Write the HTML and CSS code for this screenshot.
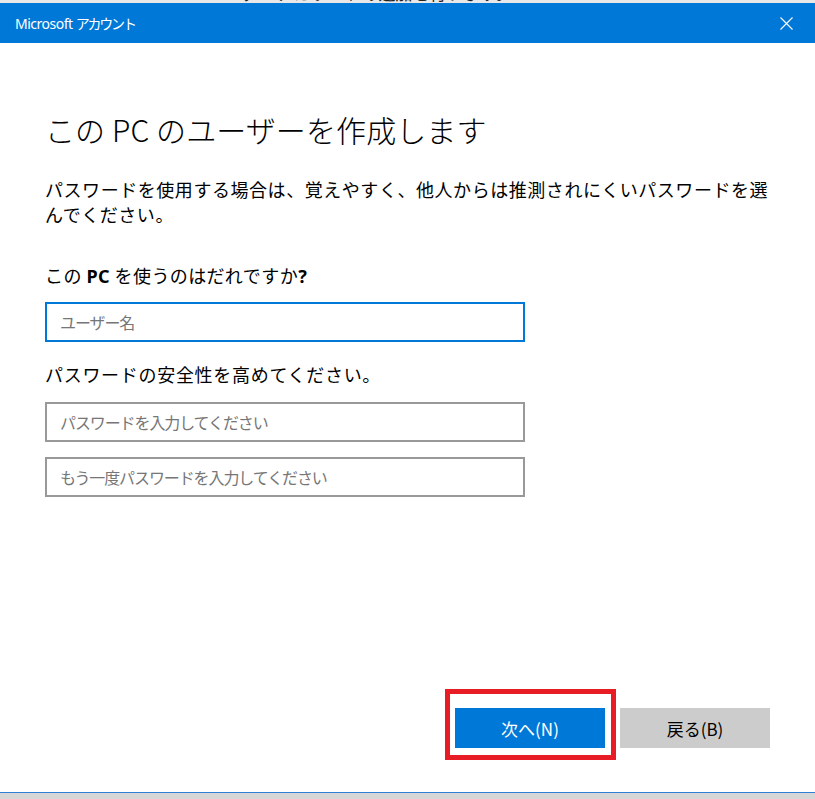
FILE: index.html
```html
<!DOCTYPE html>
<html lang="ja">
<head>
<meta charset="utf-8">
<title>Microsoft アカウント</title>
<link rel="stylesheet" href="styles.css">
</head>
<body>
<div class="behind"><span class="behind-text">ユーザー アカウントの追加を行います。</span></div>
<div class="window">
  <div class="titlebar">
    <span class="title">Microsoft <span class="title-kana">アカウント</span></span>
    <svg class="close" width="13" height="13" viewBox="0 0 13 13"><path d="M0.5 0.5 L12.5 12.5 M12.5 0.5 L0.5 12.5" stroke="#fff" stroke-width="1.1" fill="none"/></svg>
  </div>
  <div class="body">
    <div class="content">
      <h1 class="heading">この PC のユーザーを作成します</h1>
      <p class="para">パスワードを使用する場合は、覚えやすく、他人からは推測されにくいパスワードを選んでください。</p>
      <p class="label">この <b>PC</b> を使うのはだれですか<b>?</b></p>
      <div class="field field-focus"><span class="ph">ユーザー名</span></div>
      <p class="label label2">パスワードの安全性を高めてください。</p>
      <div class="field"><span class="ph">パスワードを入力してください</span></div>
      <div class="field field3"><span class="ph">もう一度パスワードを入力してください</span></div>
    </div>
    <div class="footer">
      <div class="highlight"><button class="btn btn-primary">次へ(N)</button></div>
      <button class="btn btn-secondary">戻る(B)</button>
    </div>
  </div>
</div>
</body>
</html>
```
FILE: styles.css
```css
html, body {
  margin: 0;
  padding: 0;
}
body {
  width: 815px;
  height: 799px;
  overflow: hidden;
  background: #d6d6d6;
  font-family: "Noto Sans CJK JP", "Noto Sans", sans-serif;
  color: #000;
}
.behind {
  height: 3px;
  overflow: hidden;
  background: #e8e8e8;
  padding-left: 205px;
}
.behind-text {
  display: block;
  font-size: 17px;
  line-height: 20px;
  margin-top: -17px;
  color: #222;
  white-space: nowrap;
}
.window {
  height: 789px;
  border-bottom: 1px solid #2f7fd6;
  display: flex;
  flex-direction: column;
  background: #fff;
}
.titlebar {
  height: 40px;
  flex: none;
  background: #0078d7;
  display: flex;
  align-items: center;
  justify-content: space-between;
  padding: 0 22px 0 15px;
}
.title {
  color: #fff;
  font-family: "Noto Sans", "Noto Sans CJK JP", sans-serif;
  font-size: 14px;
  line-height: 20px;
  letter-spacing: -0.5px;
}
.title-kana {
  font-family: "Noto Sans CJK JP", sans-serif;
  letter-spacing: -2.2px;
}
.close {
  display: block;
}
.body {
  flex: 1;
  display: flex;
  flex-direction: column;
}
.content {
  padding: 0 40px 0 45px;
}
.heading {
  margin: 64px 0 0;
  font-size: 30px;
  line-height: 44px;
  font-weight: 300;
  letter-spacing: 0.1px;
}
.para {
  margin: 26px 0 0;
  width: 736px;
  font-size: 18px;
  line-height: 25px;
  letter-spacing: 0.55px;
}
.label {
  margin: 36px 0 0;
  font-size: 18px;
  line-height: 25px;
  letter-spacing: 0.45px;
}
.label b {
  font-weight: 700;
  font-family: "Noto Sans", "Noto Sans CJK JP", sans-serif;
}
.label2 {
  margin-top: 20px;
  letter-spacing: 0.7px;
}
.field {
  box-sizing: border-box;
  width: 480px;
  height: 40px;
  border: 2px solid #999;
  margin-top: 15px;
  display: flex;
  align-items: center;
  padding-left: 13px;
}
.field-focus {
  border-color: #0078d7;
  margin-top: 13px;
}
.field3 {
  margin-top: 15px;
}
.ph {
  color: #767676;
  font-size: 16px;
  letter-spacing: -1.1px;
}
.footer {
  margin-top: auto;
  display: flex;
  justify-content: flex-end;
  gap: 15px;
  padding: 0 45px 44px 0;
}
.highlight {
  position: relative;
}
.highlight::after {
  content: "";
  position: absolute;
  left: -10px;
  right: -11px;
  top: -19px;
  bottom: -12px;
  border: 5px solid #e81c24;
  pointer-events: none;
}
.btn {
  display: block;
  width: 150px;
  height: 40px;
  border: 0;
  margin: 0;
  padding: 0;
  font-family: "Noto Sans CJK JP", "Noto Sans", sans-serif;
  font-size: 17px;
}
.btn-primary {
  background: #0078d7;
  color: #fff;
}
.btn-secondary {
  background: #cccccc;
  color: #000;
}
```
